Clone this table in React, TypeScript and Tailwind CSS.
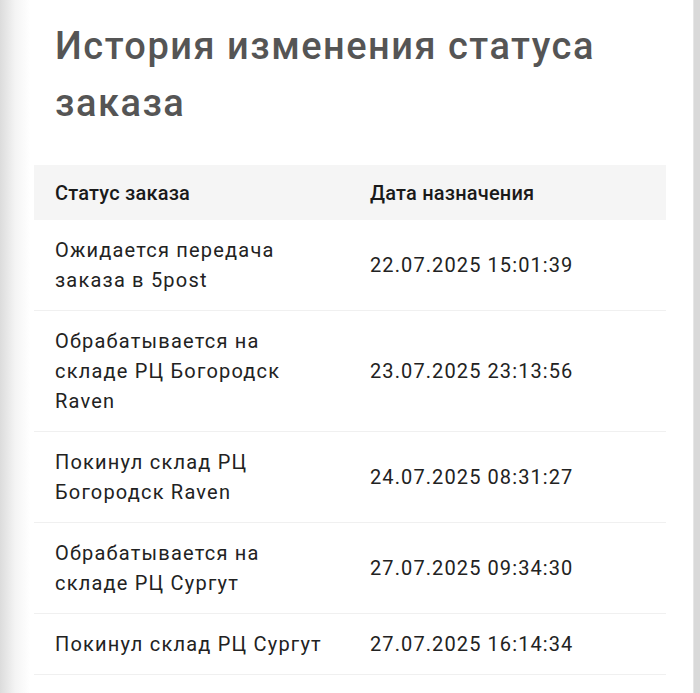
import React from "react";

const rows: [string, string][] = [
  ["Ожидается передача заказа в 5post", "22.07.2025 15:01:39"],
  ["Обрабатывается на складе РЦ Богородск Raven", "23.07.2025 23:13:56"],
  ["Покинул склад РЦ Богородск Raven", "24.07.2025 08:31:27"],
  ["Обрабатывается на складе РЦ Сургут", "27.07.2025 09:34:30"],
  ["Покинул склад РЦ Сургут", "27.07.2025 16:14:34"],
];

export default function App() {
  return (
    <div className="flex h-[693px] w-[700px] overflow-hidden bg-white" style={{ fontFamily: "Roboto, 'Noto Sans', sans-serif" }}>
      <div className="w-[30px] shrink-0 bg-gradient-to-r from-[#dcdcdc] via-[#f4f4f4] to-white" />
      <div className="flex-1 bg-white pt-[18px]">
        <h1 className="pl-[25px] pr-[20px] text-[38px] font-medium leading-[57px] tracking-[1.5px] text-[#555555]">
          История изменения статуса заказа
        </h1>
        <div className="mt-[33px] ml-[4px] w-[632px]">
          <div className="grid h-[55px] grid-cols-[315px_1fr] items-center bg-[#f5f5f5] text-[20px] font-medium tracking-[0.2px] text-[#1a1a1a]">
            <div className="pl-[21px]">Статус заказа</div>
            <div className="pl-[21px]">Дата назначения</div>
          </div>
          {rows.map(([s, d], i) => (
            <div
              key={i}
              className="grid grid-cols-[315px_1fr] items-center border-b border-[#f0f0f0] py-[15px] text-[20px] leading-[30px] text-[#222222]"
            >
              <div className="pl-[21px] pr-[21px] tracking-[1.2px]">{s}</div>
              <div className="pl-[21px] tracking-[1.1px]">{d}</div>
            </div>
          ))}
        </div>
      </div>
      <div className="w-[7px] shrink-0 border-l border-[#e6e6e6] bg-[#d9d9d9]" />
    </div>
  );
}
